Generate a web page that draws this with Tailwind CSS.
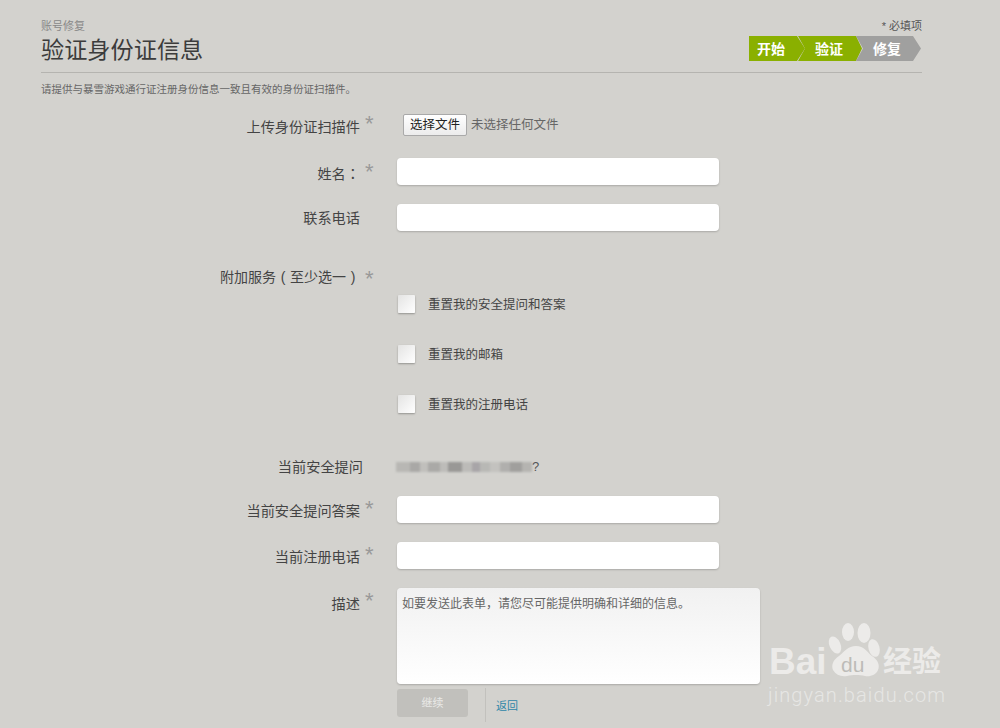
<!DOCTYPE html>
<html lang="zh-CN">
<head>
  <meta charset="UTF-8">
  <meta name="viewport" content="width=device-width, initial-scale=1.0">
  <title>账号修复</title>
  <script src="https://cdn.jsdelivr.net/npm/@tailwindcss/browser@4"></script>
</head>
<body class="bg-[#d3d2ce] font-['Liberation_Sans','Noto_Sans_CJK_SC',sans-serif] text-[#444]">
  <div class="relative h-[728px] w-[1000px] overflow-hidden">
    <div class="ml-[41px] w-[881px]">
      <!-- Header -->
      <div class="flex h-[73px] justify-between border-b border-[#b5b4b0] pt-[19px]">
        <div>
          <div class="h-[15px] text-[11px] leading-[15px] text-[#888]">账号修复</div>
          <h1 class="mt-[1px] text-[23.2px] leading-[30px] text-[#3c3c3c]">验证身份证信息</h1>
        </div>
        <div class="flex flex-col items-end">
          <div class="h-[17px] text-[11px] leading-[15px] text-[#555]">* 必填项</div>
          <div class="flex h-[25px] w-[173px] text-[14px] leading-[26px] font-bold text-white">
            <div class="h-[25px] w-[56px] shrink-0 bg-[#8ab000] pl-[8px] [clip-path:polygon(0_0,48px_0,100%_50%,48px_100%,0_100%)]">开始</div>
            <div class="-ml-[7px] h-[25px] w-[64px] shrink-0 bg-[#8ab000] pl-[17px] [clip-path:polygon(0_0,58px_0,100%_50%,58px_100%,0_100%,7px_50%)]">验证</div>
            <div class="-ml-[6px] h-[25px] w-[65px] shrink-0 bg-[#a0a09f] pl-[17px] [clip-path:polygon(0_0,57px_0,100%_50%,57px_100%,0_100%,7px_50%)]">修复</div>
          </div>
        </div>
      </div>
      <p class="mt-[8px] h-[16px] text-[10.5px] leading-[16px] text-[#666]">请提供与暴雪游戏通行证注册身份信息一致且有效的身份证扫描件。</p>

      <!-- Form -->
      <div class="mt-[16px] flex h-[22px]">
        <div class="flex w-[356px] shrink-0">
          <label class="w-[319px] pt-[4px] text-right text-[14.2px] leading-[20px]">上传身份证扫描件</label>
          <span class="-mt-[1px] pl-[5px] text-[22px] leading-[24px] text-[#999]">*</span>
        </div>
        <button class="ml-[6px] mt-[1px] h-[22px] w-[64px] rounded-[2px] border border-[#a9a9a9] bg-linear-to-b from-white to-[#ececec] text-[12.5px] leading-[20px] text-[#222]">选择文件</button>
        <span class="ml-[4px] mt-[1px] text-[12.5px] leading-[22px] text-[#666]">未选择任何文件</span>
      </div>

      <div class="mt-[23px] flex h-[27px]">
        <div class="flex w-[356px] shrink-0">
          <label class="w-[319px] pt-[5px] text-right text-[14.2px] leading-[20px]">姓名<span lang="zh-TW" class="font-['Noto_Sans_CJK_TC']">：</span></label>
          <span class="mt-[2px] pl-[5px] text-[22px] leading-[24px] text-[#999]">*</span>
        </div>
        <input type="text" class="h-[27px] w-[322px] rounded-[4px] bg-white shadow-[0_1px_2px_rgba(0,0,0,0.2)]">
      </div>

      <div class="mt-[19px] flex h-[27px]">
        <div class="flex w-[356px] shrink-0">
          <label class="w-[319px] pt-[4px] text-right text-[14.2px] leading-[20px]">联系电话</label>
        </div>
        <input type="text" class="h-[27px] w-[322px] rounded-[4px] bg-white shadow-[0_1px_2px_rgba(0,0,0,0.2)]">
      </div>

      <div class="mt-[36px] flex h-[20px]">
        <label class="w-[319px] text-right text-[14px] leading-[20px]">附加服务<span class="inline-block w-[14px] text-center">(</span>至少选一<span class="inline-block w-[14px] text-center">)</span></label>
        <span class="pl-[5px] text-[22px] leading-[24px] text-[#999]">*</span>
      </div>

      <div class="ml-[357px] mt-[8px] flex flex-col gap-[32px] text-[12.5px] text-[#444]">
        <label class="flex h-[18px] items-center">
          <span class="h-[18px] w-[17px] rounded-[1px] bg-linear-to-br from-[#e4e4e3] to-white shadow-[0_1px_2px_rgba(0,0,0,0.3)]"></span>
          <span class="ml-[13px] mt-[2px]">重置我的安全提问和答案</span>
        </label>
        <label class="flex h-[18px] items-center">
          <span class="h-[18px] w-[17px] rounded-[1px] bg-linear-to-br from-[#e4e4e3] to-white shadow-[0_1px_2px_rgba(0,0,0,0.3)]"></span>
          <span class="ml-[13px] mt-[2px]">重置我的邮箱</span>
        </label>
        <label class="flex h-[18px] items-center">
          <span class="h-[18px] w-[17px] rounded-[1px] bg-linear-to-br from-[#e4e4e3] to-white shadow-[0_1px_2px_rgba(0,0,0,0.3)]"></span>
          <span class="ml-[13px] mt-[2px]">重置我的注册电话</span>
        </label>
      </div>

      <div class="mt-[44px] flex h-[20px] items-center">
        <label class="w-[322px] text-right text-[14.2px] leading-[20px]">当前安全提问</label>
        <!-- blurred-out question -->
        <div class="ml-[33px] flex items-center">
          <div class="flex h-[10px] w-[136px] blur-[1px]">
            <span class="w-[14px] bg-[#b8b7b4]"></span>
            <span class="w-[10px] bg-[#a9a8a6]"></span>
            <span class="w-[8px] bg-[#c0bfbc]"></span>
            <span class="w-[12px] bg-[#aaa9a7]"></span>
            <span class="w-[8px] bg-[#bdbcb9]"></span>
            <span class="w-[14px] bg-[#999896]"></span>
            <span class="w-[10px] bg-[#bcbbb8]"></span>
            <span class="w-[8px] bg-[#a8a5a8]"></span>
            <span class="w-[10px] bg-[#b8b8b5]"></span>
            <span class="w-[10px] bg-[#c3c2bf]"></span>
            <span class="w-[10px] bg-[#b0afad]"></span>
            <span class="w-[12px] bg-[#a09f9d]"></span>
            <span class="w-[10px] bg-[#b5b4b1]"></span>
          </div>
          <span class="text-[13px] text-[#555]">?</span>
        </div>
      </div>

      <div class="mt-[19px] flex h-[27px]">
        <div class="flex w-[356px] shrink-0">
          <label class="w-[319px] pt-[5px] text-right text-[14.2px] leading-[20px]">当前安全提问答案</label>
          <span class="mt-[1px] pl-[5px] text-[22px] leading-[24px] text-[#999]">*</span>
        </div>
        <input type="text" class="h-[27px] w-[322px] rounded-[4px] bg-white shadow-[0_1px_2px_rgba(0,0,0,0.2)]">
      </div>

      <div class="mt-[19px] flex h-[27px]">
        <div class="flex w-[356px] shrink-0">
          <label class="w-[319px] pt-[5px] text-right text-[14.2px] leading-[20px]">当前注册电话</label>
          <span class="mt-[1px] pl-[5px] text-[22px] leading-[24px] text-[#999]">*</span>
        </div>
        <input type="text" class="h-[27px] w-[322px] rounded-[4px] bg-white shadow-[0_1px_2px_rgba(0,0,0,0.2)]">
      </div>

      <div class="mt-[19px] flex h-[96px]">
        <div class="flex w-[356px] shrink-0">
          <label class="w-[319px] pt-[6px] text-right text-[14.2px] leading-[20px]">描述</label>
          <span class="mt-[1px] pl-[5px] text-[22px] leading-[24px] text-[#999]">*</span>
        </div>
        <textarea class="h-[96px] w-[363px] resize-none rounded-[4px] bg-linear-to-b from-[#f1f1f1] to-white px-[5px] pt-[7px] text-[12px] leading-[18px] text-[#666] shadow-[0_1px_2px_rgba(0,0,0,0.2)]">如要发送此表单，请您尽可能提供明确和详细的信息。</textarea>
      </div>

      <div class="ml-[356px] mt-[4px] flex h-[34px]">
        <button class="mt-[1px] h-[28px] w-[71px] rounded-[3px] bg-[#c1c0bc] text-[11px] text-[#e9e9e7]">继续</button>
        <div class="ml-[17px] h-[34px] w-px bg-[#c2c1bd]"></div>
        <a href="#" class="ml-[10px] mt-[10px] text-[11px] leading-[16px] text-[#2f86a8]">返回</a>
      </div>
    </div>

    <!-- Baidu watermark -->
    <div class="absolute left-[766px] top-[620px] h-[90px] w-[184px] text-[#ecebe9]">
      <svg class="absolute left-0 top-0" width="184" height="70" viewBox="0 0 184 70" fill="#ecebe9">
        <ellipse cx="82" cy="12" rx="6" ry="9" />
        <ellipse cx="98" cy="13" rx="6.5" ry="10" />
        <ellipse cx="69" cy="25" rx="5.5" ry="9" transform="rotate(-25 69 25)" />
        <ellipse cx="108" cy="28" rx="5.5" ry="9" transform="rotate(-15 108 28)" />
        <path d="M90 26c8 0 11 6 16 10 6 4 8 9 6 14-2 5-8 7-13 6-3-1-6-1-9-1s-6 0-9 1c-6 1-11-1-14-6-2-5 0-10 6-14 5-4 9-10 17-10z" />
        <text x="75" y="52" font-family="Liberation Sans" font-size="21" fill="#bdbcb8">du</text>
      </svg>
      <span class="absolute left-[3px] top-[22px] text-[37px] leading-[40px] font-bold">Bai</span>
      <span class="absolute left-[117px] top-[25px] text-[29px] leading-[34px] font-bold">经验</span>
      <span class="absolute left-[2px] top-[62px] font-['Roboto'] text-[20px] leading-[26px] font-light tracking-[1.1px] text-[#e6e6e4]">jingyan.baidu.com</span>
    </div>
  </div>
</body>
</html>
